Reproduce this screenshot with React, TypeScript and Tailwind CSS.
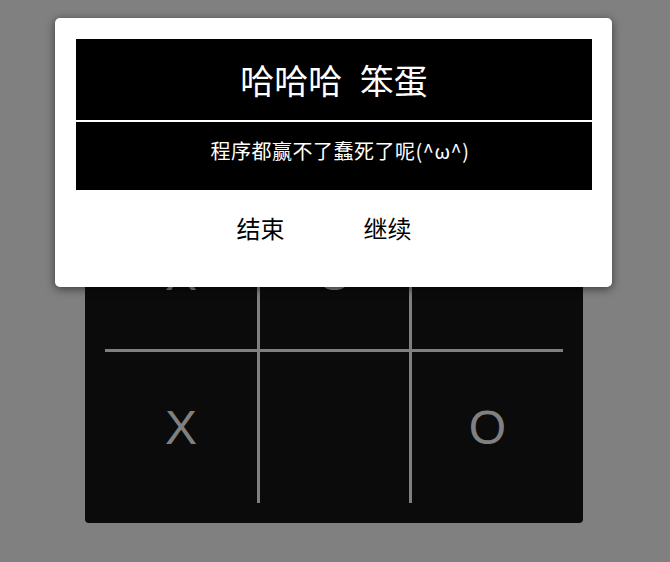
import React from "react";

const cells: string[] = ["", "", "", "X", "O", "", "X", "", "O"];

export default function App() {
  return (
    <div
      className="relative min-h-[562px] w-full bg-[#808080] pt-[26px]"
      style={{ fontFamily: '"Noto Sans CJK SC", "Noto Sans", sans-serif' }}
    >
      <div className="ml-[85px] h-[497px] w-[498px] rounded-[4px] bg-[#0b0b0b] px-[20px] pt-[20px]">
        <div className="grid h-[457px] grid-cols-[155px_152px_1fr] grid-rows-[153px_153px_1fr]">
          {cells.map((c, i) => {
            const col = i % 3;
            const row = Math.floor(i / 3);
            return (
              <div
                key={i}
                className={
                  "flex items-center justify-center border-[#808080] text-[48px] text-[#808080] " +
                  (col < 2 ? "border-r-[3px] " : "") +
                  (row < 2 ? "border-b-[3px]" : "")
                }
                style={{ fontFamily: '"Liberation Sans", Arial, sans-serif' }}
              >
                {c}
              </div>
            );
          })}
        </div>
      </div>

      <div className="absolute left-[55px] top-[18px] h-[269px] w-[557px] rounded-[5px] bg-white px-[21px] pt-[21px] shadow-[0_2px_10px_rgba(0,0,0,0.55)]">
        <div className="w-[516px] bg-black text-white">
          <div className="flex h-[81px] items-center justify-center text-[34px] leading-none [word-spacing:10px]">
            哈哈哈 笨蛋
          </div>
          <div className="h-[2px] bg-white" />
          <div className="h-[68px] pl-[12px] pt-[15px] text-center text-[20px] leading-[28px] [letter-spacing:0.5px]">
            程序都赢不了蠢死了呢(^ω^)
          </div>
        </div>
        <div className="mt-[22px] flex justify-center gap-[79px] pr-[19px] text-[24px] leading-[32px] text-black">
          <span>结束</span>
          <span>继续</span>
        </div>
      </div>
    </div>
  );
}
